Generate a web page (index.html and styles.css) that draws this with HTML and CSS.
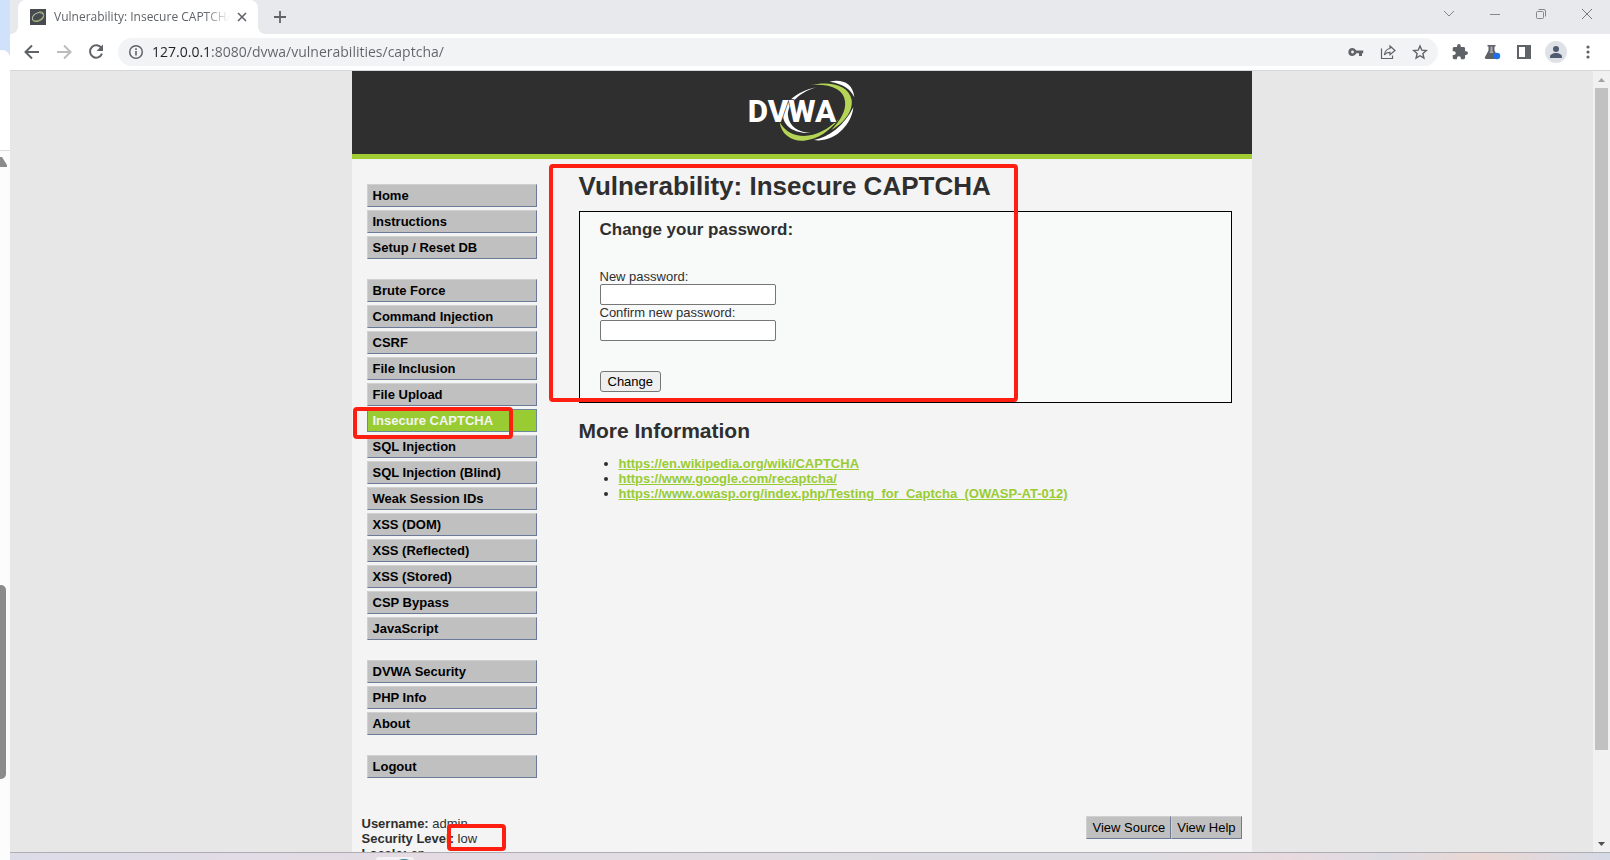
FILE: index.html
```html
<!DOCTYPE html>
<html lang="en">
<head>
    <meta charset="UTF-8">
    <meta name="viewport" content="width=device-width, initial-scale=1.0">
    <title>Vulnerability: Insecure CAPTCHA</title>
    <link rel="stylesheet" href="styles.css">
</head>
<body>
    <!-- Sliver of the window behind -->
    <div class="behind">
        <div class="behind-tabs"></div>
        <div class="behind-toolbar"></div>
        <div class="behind-page">
            <svg class="behind-arrow" width="7" height="10" viewBox="0 0 7 10"><path d="M0 0h2l5 8v2H0z" fill="#8b8b8b"/></svg>
            <div class="behind-thumb"></div>
        </div>
    </div>

    <div class="browser">
        <div class="tabstrip">
            <div class="tab">
                <svg width="16" height="16" viewBox="0 0 16 16">
                    <rect width="16" height="16" fill="#474b50"/>
                    <ellipse cx="8" cy="8" rx="6" ry="4" transform="rotate(-25 8 8)" fill="none" stroke="#b9c1b4" stroke-width="1"/>
                    <path d="M9 3c5-1 6 3 3 6-3 3-8 4-9 2" fill="none" stroke="#8fae4c" stroke-width="1"/>
                </svg>
                <span class="tab-title">Vulnerability: Insecure CAPTCHA</span>
                <button class="icon-button tab-close" aria-label="Close tab">
                    <svg width="16" height="16" viewBox="0 0 16 16"><path d="M4 4l8 8M12 4l-8 8" stroke="#5f6368" stroke-width="1.6"/></svg>
                </button>
            </div>
            <button class="icon-button new-tab" aria-label="New tab">
                <svg width="16" height="16" viewBox="0 0 16 16"><path d="M8 2v12M2 8h12" stroke="#5f6368" stroke-width="1.8"/></svg>
            </button>
            <div class="window-buttons">
                <button class="icon-button" aria-label="Search tabs"><svg width="12" height="12" viewBox="0 0 12 12"><path d="M1 3l5 5 5-5" fill="none" stroke="#85878b"/></svg></button>
                <button class="icon-button" aria-label="Minimize"><svg width="12" height="12" viewBox="0 0 12 12"><path d="M1 6.500h10" stroke="#85878b"/></svg></button>
                <button class="icon-button" aria-label="Restore"><svg width="12" height="12" viewBox="0 0 12 12"><rect x="1.500" y="3.500" width="7" height="7" rx="1" fill="none" stroke="#85878b"/><path d="M3.500 1.500H9a1.500 1.500 0 0 1 1.500 1.500v5.500" fill="none" stroke="#85878b"/></svg></button>
                <button class="icon-button" aria-label="Close"><svg width="12" height="12" viewBox="0 0 12 12"><path d="M1 1l10 10M11 1L1 11" stroke="#77797d"/></svg></button>
            </div>
        </div>

        <div class="toolbar">
            <button class="icon-button" aria-label="Back"><svg width="18" height="18" viewBox="0 0 18 18"><path d="M16 9H3M9 2.500L2.500 9 9 15.500" fill="none" stroke="#5f6368" stroke-width="2"/></svg></button>
            <button class="icon-button" aria-label="Forward"><svg width="18" height="18" viewBox="0 0 18 18"><path d="M2 9h13M9 2.500L15.500 9 9 15.500" fill="none" stroke="#babcbe" stroke-width="2"/></svg></button>
            <button class="icon-button" aria-label="Reload"><svg width="18" height="18" viewBox="0 0 18 18"><path d="M14.500 5.200A6.200 6.200 0 1 0 15 10.700" fill="none" stroke="#5f6368" stroke-width="2"/><path d="M16 1.500V8H9.500z" fill="#5f6368"/></svg></button>
            <div class="omnibox">
                <svg width="16" height="16" viewBox="0 0 16 16"><circle cx="8" cy="8" r="6.300" fill="none" stroke="#5f6368" stroke-width="1.500"/><path d="M8 7v4.500M8 4.300v1.600" stroke="#5f6368" stroke-width="1.600"/></svg>
                <input class="url" type="text" aria-label="Address" value="127.0.0.1:8080/dvwa/vulnerabilities/captcha/">
                <button class="icon-button" aria-label="Passwords"><svg width="16" height="16" viewBox="0 0 16 16"><path fill-rule="evenodd" d="M4.500 4a4 4 0 1 0 3.700 5.200H11V12h3V9.200h1.200V6.600H8.200A4 4 0 0 0 4.500 4zm0 2.600a1.400 1.400 0 1 1 0 2.800 1.400 1.400 0 0 1 0-2.800z" fill="#5f6368"/></svg></button>
                <button class="icon-button" aria-label="Share"><svg width="16" height="16" viewBox="0 0 16 16"><path d="M1.500 4.500v10h11v-3" fill="none" stroke="#5f6368" stroke-width="1.200"/><path d="M10 2l5 4.500-5 4.300V8.400c-2.500-.2-4.200.7-5.600 2.600.5-3.700 2.300-6 5.600-6.500z" fill="none" stroke="#5f6368" stroke-width="1.200"/></svg></button>
                <button class="icon-button" aria-label="Bookmark"><svg width="16" height="16" viewBox="0 0 16 16"><path d="M8 2l1.800 4.200 4.500.4-3.400 3 1 4.500L8 11.700l-3.900 2.400 1-4.500-3.400-3 4.500-.4z" fill="none" stroke="#5f6368" stroke-width="1.400"/></svg></button>
            </div>
            <button class="icon-button" aria-label="Extensions"><svg width="16" height="16" viewBox="1 1 22 22"><path d="M20.500 11H19V7c0-1.100-.9-2-2-2h-4V3.500a2.500 2.500 0 0 0-5 0V5H4c-1.100 0-2 .9-2 2v3.800h1.500a2.700 2.700 0 0 1 0 5.400H2V20c0 1.100.9 2 2 2h3.800v-1.500a2.700 2.700 0 0 1 5.400 0V22H17c1.100 0 2-.9 2-2v-4h1.500a2.500 2.500 0 0 0 0-5z" fill="#5f6368"/></svg></button>
            <button class="icon-button" aria-label="Experiments"><svg width="18" height="18" viewBox="0 0 18 18"><path d="M4.500 2h8v1.500H11.500v4l3.500 6.500c.5 1-.1 2-1.200 2H3.200c-1.100 0-1.700-1-1.200-2l3.500-6.500v-4h-1z" fill="#5f6368"/><path d="M7.500 3.500h2v4.500l1 2h-4l1-2z" fill="#a9acb0"/><circle cx="14" cy="13" r="3.200" fill="#1a73e8"/></svg></button>
            <button class="icon-button" aria-label="Side panel"><svg width="16" height="16" viewBox="0 0 16 16"><path fill-rule="evenodd" d="M1 1h14v14H1zm2 2v10h6V3z" fill="#5f6368"/></svg></button>
            <button class="icon-button" aria-label="Profile"><svg width="22" height="22" viewBox="0 0 22 22"><circle cx="11" cy="11" r="11" fill="#dee1e6"/><circle cx="11" cy="8" r="3" fill="#4f5b70"/><path d="M5 17v-1.500c0-2.200 3.500-3.500 6-3.500s6 1.300 6 3.500V17z" fill="#4f5b70"/></svg></button>
            <button class="icon-button" aria-label="Menu"><svg width="16" height="16" viewBox="0 0 16 16"><g fill="#5f6368"><circle cx="8" cy="3" r="1.600"/><circle cx="8" cy="8" r="1.600"/><circle cx="8" cy="13" r="1.600"/></g></svg></button>
        </div>

        <div class="viewport">
            <div class="page">
                <div class="container">
                    <header class="header">
                        <svg class="logo" width="110" height="65" viewBox="140 55 330 195" role="img" aria-label="DVWA">
                            <path d="M347 83C285 96 245 135 248 170c3 32 38 53 84 50-40-2-66-22-69-52-3-30 29-68 84-85z" fill="#fff"/>
                            <path d="M388 66c35-8 70 3 74 47-10-22-30-40-74-47z" fill="#fff"/>
                            <path d="M459 143c-4 50-56 108-118 98 45-8 90-42 118-98z" fill="#fff"/>
                            <path d="M330 76c60-13 116 0 124 45 5 35-25 70-61 90 28-30 45-58 41-87-5-35-42-53-104-48z" fill="#b3d455"/>
                            <path d="M238 187c4 38 38 59 73 56 40-3 78-29 104-64-32 30-68 50-104 50-32 0-58-14-73-42z" fill="#b3d455"/>
                            <text class="logo-text" x="142" y="187">DVWA</text>
                        </svg>
                    </header>

                    <div class="columns">
                        <nav class="menu">
                            <ul>
                                <li><a href="#">Home</a></li>
                                <li><a href="#">Instructions</a></li>
                                <li><a href="#">Setup / Reset DB</a></li>
                            </ul>
                            <ul>
                                <li><a href="#">Brute Force</a></li>
                                <li><a href="#">Command Injection</a></li>
                                <li><a href="#">CSRF</a></li>
                                <li><a href="#">File Inclusion</a></li>
                                <li><a href="#">File Upload</a></li>
                                <li class="marked"><a class="selected" href="#">Insecure CAPTCHA</a><span class="mark mark-menu"></span></li>
                                <li><a href="#">SQL Injection</a></li>
                                <li><a href="#">SQL Injection (Blind)</a></li>
                                <li><a href="#">Weak Session IDs</a></li>
                                <li><a href="#">XSS (DOM)</a></li>
                                <li><a href="#">XSS (Reflected)</a></li>
                                <li><a href="#">XSS (Stored)</a></li>
                                <li><a href="#">CSP Bypass</a></li>
                                <li><a href="#">JavaScript</a></li>
                            </ul>
                            <ul>
                                <li><a href="#">DVWA Security</a></li>
                                <li><a href="#">PHP Info</a></li>
                                <li><a href="#">About</a></li>
                            </ul>
                            <ul>
                                <li><a href="#">Logout</a></li>
                            </ul>
                        </nav>

                        <main class="content marked">
                            <h1>Vulnerability: Insecure CAPTCHA</h1>
                            <form class="panel">
                                <h3>Change your password:</h3>
                                <label for="password-new">New password:</label>
                                <input type="password" id="password-new">
                                <label for="password-conf">Confirm new password:</label>
                                <input type="password" id="password-conf">
                                <button type="button">Change</button>
                            </form>
                            <h2>More Information</h2>
                            <ul class="links">
                                <li><a href="#">https://en.wikipedia.org/wiki/CAPTCHA</a></li>
                                <li><a href="#">https://www.google.com/recaptcha/</a></li>
                                <li><a href="#">https://www.owasp.org/index.php/Testing_for_Captcha_(OWASP-AT-012)</a></li>
                            </ul>
                            <span class="mark mark-form"></span>
                        </main>
                    </div>

                    <div class="system-info marked">
                        <div>
                            <div><b>Username:</b> admin</div>
                            <div><b>Security Level:</b> low</div>
                            <div><b>Locale:</b> en</div>
                        </div>
                        <div class="view-buttons">
                            <button>View Source</button><button>View Help</button>
                        </div>
                        <span class="mark mark-level"></span>
                    </div>
                </div>
            </div>
            <div class="scrollbar">
                <svg width="17" height="17" viewBox="0 0 17 17"><path d="M5 11l3.500-4 3.500 4z" fill="#a3a3a3"/></svg>
                <div class="scroll-track"><div class="scroll-thumb"></div></div>
                <svg width="17" height="17" viewBox="0 0 17 17"><path d="M5 7l3.500 4L12 7z" fill="#505050"/></svg>
            </div>
        </div>

        <div class="taskbar">
            <svg width="38" height="7" viewBox="0 0 38 7"><path d="M0 7V6a3 3 0 0 1 3-2h32a3 3 0 0 1 3 2v1z" fill="#f3f1f4"/><path d="M23 7q5-2 10 0z" fill="#2b7f88"/></svg>
        </div>
    </div>
</body>
</html>
```
FILE: styles.css
```css
* {
    box-sizing: border-box;
}
body {
    display: flex;
    height: 100vh;
    margin: 0;
    overflow: hidden;
    font-family: Arial, "Liberation Sans", sans-serif;
    font-size: 13px;
    line-height: 15px;
    color: #2f2f2f;
}
svg {
    display: block;
    flex: none;
}
.icon-button {
    display: flex;
    justify-content: center;
    align-items: center;
    flex: none;
    width: 32px;
    height: 28px;
    padding: 0;
    border: none;
    background: none;
}

/* Window behind */
.behind {
    display: flex;
    flex-direction: column;
    flex: none;
    width: 10px;
    background: #d0e1fc;
}
.behind-tabs {
    height: 50px;
}
.behind-toolbar {
    height: 101px;
    background: #fff;
    border-bottom: 1px solid #dcdcdc;
    border-top-right-radius: 8px;
}
.behind-page {
    display: flex;
    flex-direction: column;
    flex: 1;
    background: #fcfcfc;
}
.behind-arrow {
    margin-top: 6px;
}
.behind-thumb {
    width: 6px;
    height: 194px;
    margin-top: 418px;
    border-radius: 0 5px 5px 0;
    background: #8b8b8b;
}

/* Browser frame */
.browser {
    display: flex;
    flex-direction: column;
    flex: 1;
    min-width: 0;
}
.tabstrip {
    display: flex;
    align-items: center;
    height: 34px;
    padding-left: 8px;
    background: #e8e9ed;
}
.tab {
    display: flex;
    align-items: center;
    position: relative;
    width: 240px;
    height: 34px;
    padding: 0 8px 0 12px;
    border-radius: 8px 8px 0 0;
    background: #fff;
}
.tab::before,
.tab::after {
    content: "";
    position: absolute;
    bottom: 0;
    width: 8px;
    height: 8px;
}
.tab::before {
    left: -8px;
    background: radial-gradient(circle at 0 0, #e8e9ed 8px, #fff 8px);
}
.tab::after {
    right: -8px;
    background: radial-gradient(circle at 100% 0, #e8e9ed 8px, #fff 8px);
}
.tab-title {
    flex: 1;
    margin-left: 8px;
    overflow: hidden;
    white-space: nowrap;
    font-family: "Open Sans", sans-serif;
    font-size: 12px;
    line-height: 18px;
    color: #5f6368;
    -webkit-mask-image: linear-gradient(to right, #000 150px, transparent 176px);
    mask-image: linear-gradient(to right, #000 150px, transparent 176px);
}
.tab-close {
    width: 16px;
    margin-left: 4px;
}
.new-tab {
    margin-left: 6px;
}
.window-buttons {
    display: flex;
    margin-left: auto;
}
.window-buttons .icon-button {
    width: 46px;
    padding-bottom: 6px;
}
.toolbar {
    display: flex;
    align-items: center;
    height: 37px;
    padding: 0 6px;
    border-bottom: 1px solid #d5d6d8;
    background: #fff;
}
.omnibox {
    display: flex;
    align-items: center;
    flex: 1;
    height: 28px;
    margin-left: 6px;
    margin-right: 6px;
    padding: 0 2px 0 10px;
    border-radius: 14px;
    background: #f1f3f4;
}
.url {
    flex: 1;
    min-width: 0;
    height: 20px;
    margin-left: 8px;
    padding: 0;
    border: none;
    font-family: "Open Sans", sans-serif;
    font-size: 14px;
    line-height: 20px;
    /* host darker than the rest of the address */
    background: linear-gradient(to right, #202124 58px, #5f6368 58px);
    -webkit-background-clip: text;
    background-clip: text;
    -webkit-text-fill-color: transparent;
}

/* Page */
.viewport {
    display: flex;
    flex: 1;
    min-height: 0;
}
.page {
    flex: 1;
    overflow: hidden;
    background: #e7e7e7;
}
.container {
    max-width: 900px;
    min-height: 100%;
    margin: 0 auto;
    background: #f4f4f4;
}
.header {
    display: flex;
    justify-content: center;
    padding: 7px 0 11px;
    border-bottom: 5px solid #a1cc33;
    background: #2f2f2f;
}
.logo-text {
    font-family: Roboto, sans-serif;
    font-size: 94px;
    font-weight: 800;
    fill: #fff;
    stroke: #2f2f2f;
    stroke-width: 4px;
    paint-order: stroke;
}
.columns {
    display: flex;
}
.menu {
    flex: none;
    width: 185px;
    padding: 25px 0 0 15px;
}
.menu ul {
    display: flex;
    flex-direction: column;
    gap: 3px;
    margin: 0 0 20px;
    padding: 0;
    list-style: none;
}
.menu a {
    display: block;
    height: 23px;
    padding: 3px 5px;
    border: 1px solid;
    border-color: #d0d0d0 #6b7a99 #6b7a99 #d0d0d0;
    background: #c0c0c0;
    color: #000;
    font-weight: bold;
    text-decoration: none;
}
.menu a.selected {
    border-color: #6b8a99;
    background: #99cc33;
    color: #f4f4f4;
}
.content {
    flex: 1;
    min-width: 0;
    padding: 11px 20px 0 42px;
}
h1 {
    margin: 0 0 9px;
    font-size: 26px;
    line-height: 32px;
}
h2 {
    margin: 16px 0 13px;
    font-size: 21px;
    line-height: 24px;
}
h3 {
    margin: 0 0 29px;
    font-size: 17px;
    line-height: 20px;
}
.panel {
    display: flex;
    flex-direction: column;
    align-items: flex-start;
    padding: 8px 20px 10px;
    border: 1px solid #000;
    background: #f8faf9;
}
.panel input {
    width: 176px;
    height: 21px;
    border: 1px solid #767676;
    border-radius: 2px;
    background: #fff;
}
.panel button {
    height: 21px;
    margin-top: 30px;
    padding: 0 7px;
    border: 1px solid #767676;
    border-radius: 3px;
    background: #efefef;
    color: #000;
    font-family: inherit;
    font-size: 13px;
}
.links {
    margin: 0;
    padding-left: 40px;
}
.links a {
    color: #99cc33;
    font-weight: bold;
}
.system-info {
    display: flex;
    justify-content: space-between;
    align-items: flex-start;
    margin-top: 18px;
    padding: 0 10px 24px;
}
.view-buttons {
    display: flex;
}
.view-buttons button {
    height: 23px;
    padding: 0 5px;
    border: 1px solid;
    border-color: #d0d0d0 #6b7a99 #6b7a99 #d0d0d0;
    background: #c0c0c0;
    color: #000;
    font-family: inherit;
    font-size: 13px;
}

/* Red highlight boxes */
.marked {
    position: relative;
}
.mark {
    position: absolute;
    border: 4px solid #ff1f10;
    border-radius: 4px;
    pointer-events: none;
}
.mark-menu {
    top: -2px;
    left: -14px;
    z-index: 1;
    width: 160px;
    height: 32px;
}
.mark-form {
    top: 5px;
    left: 12px;
    width: 469px;
    height: 238px;
}
.mark-level {
    top: 8px;
    left: 95px;
    width: 59px;
    height: 27px;
}

/* Scrollbar and taskbar */
.scrollbar {
    display: flex;
    flex-direction: column;
    flex: none;
    width: 17px;
    background: #f1f1f1;
}
.scroll-track {
    flex: 1;
    padding: 0 2px;
}
.scroll-thumb {
    height: calc(89% - 3px);
    background: #c1c1c1;
}
.taskbar {
    height: 8px;
    padding-left: 366px;
    border-top: 1px solid #adadb3;
    background: linear-gradient(to right, #dcdce8, #e4dbe3 25%, #dfdce2 50%, #dcdce2 70%, #e8dade 80%, #dcdbe2 86%, #ebd7d2 92%, #d5dae7);
}
```
